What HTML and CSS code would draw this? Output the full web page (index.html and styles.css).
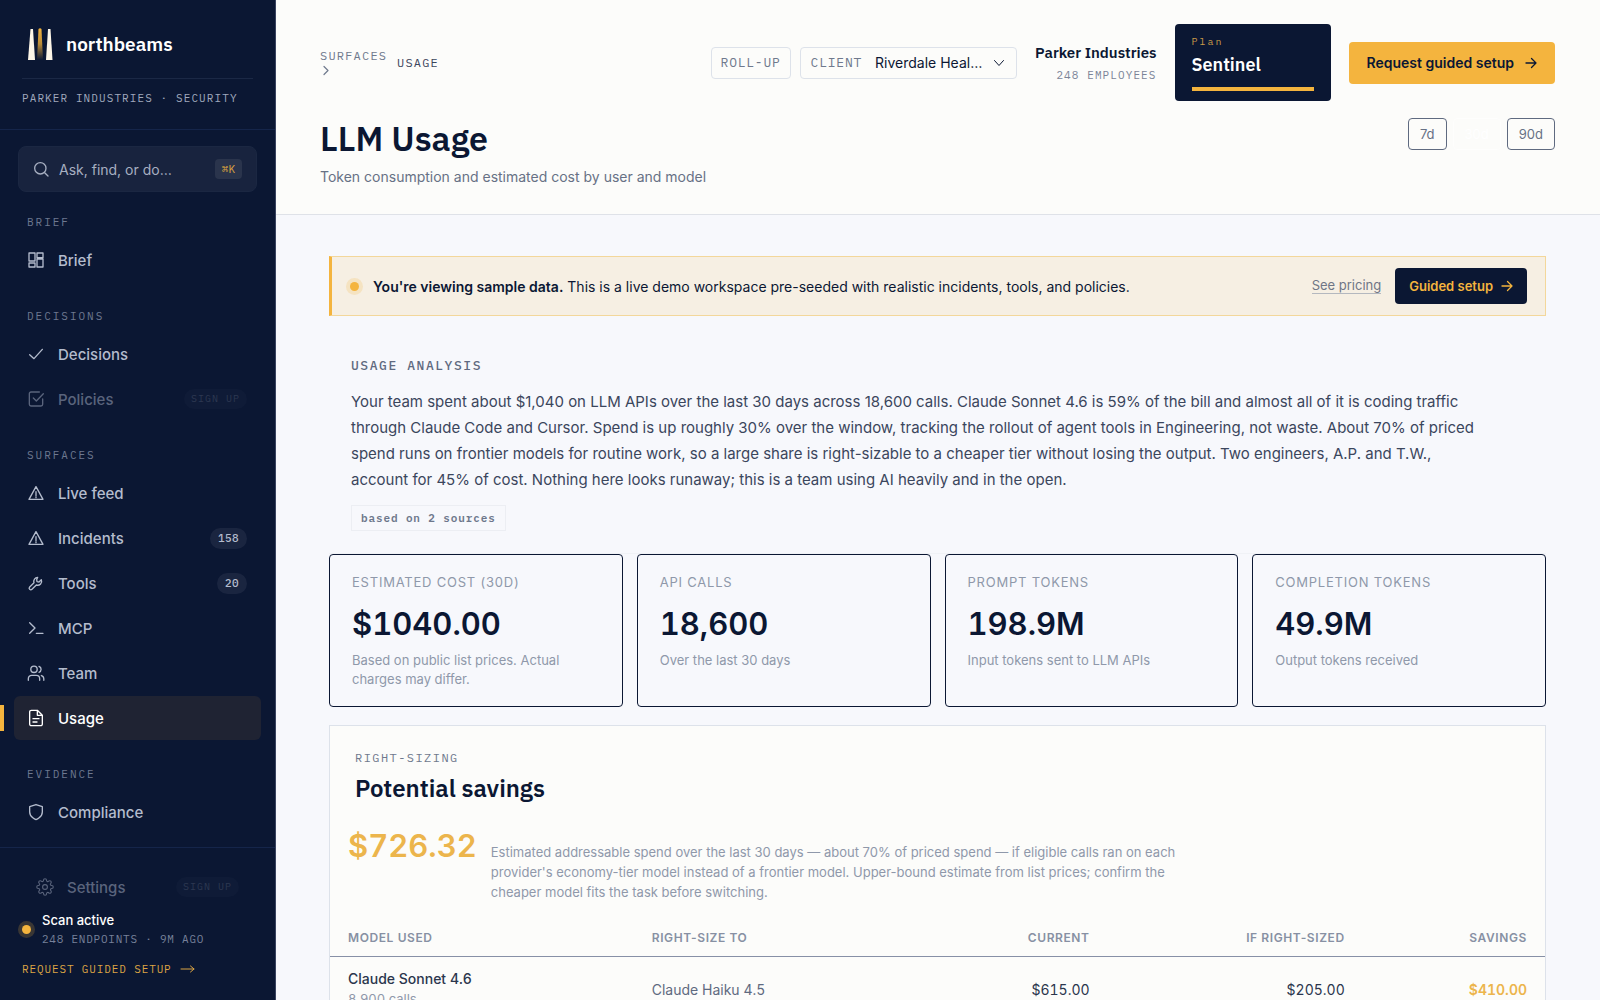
FILE: index.html
```html
<!DOCTYPE html>
<html lang="en">
<head>
    <meta charset="UTF-8">
    <meta name="viewport" content="width=device-width, initial-scale=1.0">
    <title>LLM Usage - northbeams</title>
    <link rel="stylesheet" href="styles.css">
</head>
<body>
    <div class="app">
        <aside class="sidebar">
            <div class="brand">
                <a class="brand-link" href="#">
                    <svg class="brand-logo" width="28" height="34" viewBox="0 0 28 34">
                        <defs>
                            <linearGradient id="beam" x1="0" y1="0" x2="0" y2="1">
                                <stop offset="0" stop-color="#f4b43e"/>
                                <stop offset="0.5" stop-color="#b88a38"/>
                                <stop offset="1" stop-color="#0b1733"/>
                            </linearGradient>
                        </defs>
                        <path d="M4.500 2h2.500l2 31H2z" fill="#fdf6e8"/>
                        <path d="M12.500 2q1.500-1.500 3 0l1.500 31h-6z" fill="url(#beam)"/>
                        <path d="M22 2h2.500l2 31h-6.500z" fill="#fdf6e8"/>
                    </svg>
                    <span class="brand-name">northbeams</span>
                </a>
                <p class="brand-org">PARKER INDUSTRIES · SECURITY</p>
            </div>

            <button class="search" type="button">
                <svg class="icon" viewBox="0 0 24 24"><circle cx="11" cy="11" r="8.5"/><path d="m17.5 17.5 5 5"/></svg>
                <span>Ask, find, or do…</span>
                <kbd>⌘K</kbd>
            </button>

            <nav class="nav">
                <h2 class="nav-label">BRIEF</h2>
                <a class="nav-item" href="#">
                    <svg class="icon" viewBox="0 0 24 24"><path d="M1.500 1.500h9v12h-9zM13.500 1.500h9v7h-9zM13.500 10.500h9v12h-9zM1.500 16.500h9v6h-9z"/></svg>
                    <span>Brief</span>
                </a>

                <h2 class="nav-label">DECISIONS</h2>
                <a class="nav-item" href="#">
                    <svg class="icon" viewBox="0 0 24 24"><path d="M21.500 5 9 19l-6.500-6"/></svg>
                    <span>Decisions</span>
                </a>
                <a class="nav-item locked" href="#">
                    <svg class="icon" viewBox="0 0 24 24"><path d="m8 10.500 4.500 4.500L23 4"/><path d="M22 12v8a2.500 2.500 0 0 1-2.500 2.500h-15A2.500 2.500 0 0 1 2 20V4a2.500 2.500 0 0 1 2.500-2.500H17"/></svg>
                    <span>Policies</span>
                    <span class="pill">SIGN UP</span>
                </a>

                <h2 class="nav-label">SURFACES</h2>
                <a class="nav-item" href="#">
                    <svg class="icon" viewBox="0 0 24 24"><path d="M12 2.500 1.500 21.500h21zM12 10v6M12 18v1"/></svg>
                    <span>Live feed</span>
                </a>
                <a class="nav-item" href="#">
                    <svg class="icon" viewBox="0 0 24 24"><path d="M12 2.500 1.500 21.500h21zM12 10v6M12 18v1"/></svg>
                    <span>Incidents</span>
                    <span class="count">158</span>
                </a>
                <a class="nav-item" href="#">
                    <svg class="icon" viewBox="0 0 24 24"><path d="M14.500 3.500a6 6 0 0 0-5.500 8L2.500 18a2.300 2.300 0 0 0 3.500 3.500l6.500-6.500a6 6 0 0 0 7.500-8l-3.500 3.500-3-.500-.500-3z"/></svg>
                    <span>Tools</span>
                    <span class="count">20</span>
                </a>
                <a class="nav-item" href="#">
                    <svg class="icon" viewBox="0 0 24 24"><path d="m2.500 4 8 8-8 8M12.500 20h10"/></svg>
                    <span>MCP</span>
                </a>
                <a class="nav-item" href="#">
                    <svg class="icon" viewBox="0 0 24 24"><circle cx="9" cy="6.500" r="4.800"/><path d="M.500 23v-2.500a5 5 0 0 1 5-5h7a5 5 0 0 1 5 5V23M16.500 2a4.800 4.800 0 0 1 0 9M20 15.800a5 5 0 0 1 3.700 4.700V23"/></svg>
                    <span>Team</span>
                </a>
                <a class="nav-item active" href="#">
                    <svg class="icon" viewBox="0 0 24 24"><path d="M14 .500H5A2.500 2.500 0 0 0 2.500 3v18A2.500 2.500 0 0 0 5 23.500h14a2.500 2.500 0 0 0 2.500-2.500V8zM14 .500V8h7.500M7.500 13h9M7.500 18h6"/></svg>
                    <span>Usage</span>
                </a>

                <h2 class="nav-label">EVIDENCE</h2>
                <a class="nav-item" href="#">
                    <svg class="icon" viewBox="0 0 24 24"><path d="M12 23.500s9.500-3.500 9.500-11.500V4L12 .800 2.500 4v8c0 8 9.500 11.500 9.500 11.500z"/></svg>
                    <span>Compliance</span>
                </a>
            </nav>

            <div class="sidebar-footer">
                <a class="nav-item locked settings" href="#">
                    <svg class="icon" viewBox="0 0 24 24"><circle cx="12" cy="12" r="3.200"/><path d="M19.400 15a1.650 1.650 0 0 0 .33 1.820l.06.06a2 2 0 1 1-2.830 2.830l-.06-.06a1.650 1.650 0 0 0-2.800 1.170V21a2 2 0 1 1-4 0v-.09a1.650 1.650 0 0 0-2.910-1.200l-.06.06a2 2 0 1 1-2.830-2.830l.06-.06A1.650 1.650 0 0 0 3.090 14H3a2 2 0 1 1 0-4h.09a1.650 1.650 0 0 0 1.200-2.910l-.06-.06a2 2 0 1 1 2.830-2.830l.06.06A1.650 1.650 0 0 0 10 3.090V3a2 2 0 1 1 4 0v.09a1.650 1.650 0 0 0 2.820 1.200l.06-.06a2 2 0 1 1 2.830 2.830l-.06.06A1.650 1.650 0 0 0 20.910 10H21a2 2 0 1 1 0 4h-.09a1.650 1.650 0 0 0-1.510 1z"/></svg>
                    <span>Settings</span>
                    <span class="pill">SIGN UP</span>
                </a>
                <div class="scan">
                    <span class="dot"></span>
                    <div>
                        <p class="scan-title">Scan active</p>
                        <p class="scan-meta">248 ENDPOINTS · 9M AGO</p>
                    </div>
                </div>
                <a class="setup-link" href="#">
                    REQUEST GUIDED SETUP
                    <svg class="long-arrow" viewBox="0 0 16 10"><path d="M1 5h13M10.500 2l3.500 3-3.500 3"/></svg>
                </a>
            </div>
        </aside>

        <div class="page">
            <header class="header">
                <div class="topbar">
                    <nav class="breadcrumb">
                        <a href="#">SURFACES
                            <svg class="crumb-arrow" viewBox="0 0 12 12"><path d="m4 2 4 4-4 4"/></svg>
                        </a>
                        <span>USAGE</span>
                    </nav>
                    <div class="topbar-tools">
                        <div class="scope">
                            <button class="rollup" type="button">ROLL-UP</button>
                            <div class="client">
                                <label for="client">CLIENT</label>
                                <select id="client">
                                    <option>Riverdale Heal…</option>
                                </select>
                                <svg class="chevron" viewBox="0 0 12 12"><path d="m1.500 3.500 4.500 5 4.500-5"/></svg>
                            </div>
                        </div>
                        <div class="org">
                            <p class="org-name">Parker Industries</p>
                            <p class="org-meta">248 EMPLOYEES</p>
                        </div>
                        <div class="plan">
                            <p class="plan-label">Plan</p>
                            <p class="plan-name">Sentinel</p>
                            <div class="plan-bar"></div>
                        </div>
                        <button class="cta" type="button">
                            Request guided setup
                            <svg class="arrow" viewBox="0 0 12 12"><path d="M1 6h10M6.500 1.500 11 6l-4.500 4.500"/></svg>
                        </button>
                    </div>
                </div>
                <div class="title-row">
                    <div>
                        <h1>LLM Usage</h1>
                        <p class="subtitle">Token consumption and estimated cost by user and model</p>
                    </div>
                    <div class="ranges">
                        <button type="button">7d</button>
                        <button class="selected" type="button">30d</button>
                        <button type="button">90d</button>
                    </div>
                </div>
            </header>

            <main class="content">
                <div class="banner">
                    <span class="dot"></span>
                    <p><strong>You're viewing sample data.</strong> This is a live demo workspace pre-seeded with realistic incidents, tools, and policies.</p>
                    <a class="pricing" href="#">See pricing</a>
                    <button class="guided" type="button">
                        Guided setup
                        <svg class="arrow" viewBox="0 0 12 12"><path d="M1 6h10M6.500 1.500 11 6l-4.500 4.500"/></svg>
                    </button>
                </div>

                <section class="analysis">
                    <h2>USAGE ANALYSIS</h2>
                    <p>Your team spent about $1,040 on LLM APIs over the last 30 days across 18,600 calls. Claude Sonnet 4.6 is 59% of the bill and almost all of it is coding traffic through Claude Code and Cursor. Spend is up roughly 30% over the window, tracking the rollout of agent tools in Engineering, not waste. About 70% of priced spend runs on frontier models for routine work, so a large share is right-sizable to a cheaper tier without losing the output. Two engineers, A.P. and T.W., account for 45% of cost. Nothing here looks runaway; this is a team using AI heavily and in the open.</p>
                    <button class="sources" type="button">based on 2 sources</button>
                </section>

                <section class="stats">
                    <div class="stat">
                        <h3>ESTIMATED COST (30D)</h3>
                        <p class="stat-value">$1040.00</p>
                        <p class="stat-note">Based on public list prices. Actual charges may differ.</p>
                    </div>
                    <div class="stat">
                        <h3>API CALLS</h3>
                        <p class="stat-value">18,600</p>
                        <p class="stat-note">Over the last 30 days</p>
                    </div>
                    <div class="stat">
                        <h3>PROMPT TOKENS</h3>
                        <p class="stat-value">198.9M</p>
                        <p class="stat-note">Input tokens sent to LLM APIs</p>
                    </div>
                    <div class="stat">
                        <h3>COMPLETION TOKENS</h3>
                        <p class="stat-value">49.9M</p>
                        <p class="stat-note">Output tokens received</p>
                    </div>
                </section>

                <section class="panel">
                    <div class="panel-head">
                        <p class="eyebrow">RIGHT-SIZING</p>
                        <h2>Potential savings</h2>
                    </div>
                    <div class="savings">
                        <p class="savings-value">$726.32</p>
                        <p class="savings-note">Estimated addressable spend over the last 30 days — about 70% of priced spend — if eligible calls ran on each provider's economy-tier model instead of a frontier model. Upper-bound estimate from list prices; confirm the cheaper model fits the task before switching.</p>
                    </div>
                    <table>
                        <thead>
                            <tr>
                                <th class="col-model">MODEL USED</th>
                                <th class="col-target">RIGHT-SIZE TO</th>
                                <th class="col-current num">CURRENT</th>
                                <th class="col-sized num">IF RIGHT-SIZED</th>
                                <th class="num">SAVINGS</th>
                            </tr>
                        </thead>
                        <tbody>
                            <tr>
                                <td><span class="model">Claude Sonnet 4.6</span><span class="calls">8,900 calls</span></td>
                                <td class="target">Claude Haiku 4.5</td>
                                <td class="num">$615.00</td>
                                <td class="num">$205.00</td>
                                <td class="num saved">$410.00</td>
                            </tr>
                        </tbody>
                    </table>
                </section>
            </main>
        </div>
    </div>
</body>
</html>
```

FILE: styles.css
```css
* {
    box-sizing: border-box;
}
body {
    margin: 0;
    font-family: Inter, sans-serif;
    font-size: 15px;
    font-optical-sizing: none;
    color: #0b1733;
    background-color: #f7f8fc;
}
h1, h2, h3, p {
    margin: 0;
}
a {
    color: inherit;
    text-decoration: none;
}
button, select {
    font-family: inherit;
    color: inherit;
    cursor: pointer;
}
svg {
    fill: none;
    stroke: currentColor;
    stroke-linecap: round;
    stroke-linejoin: round;
    flex-shrink: 0;
}
.app {
    display: flex;
    height: 100vh;
    overflow: hidden;
}

/* sidebar */
.sidebar {
    display: flex;
    flex-direction: column;
    width: 276px;
    flex-shrink: 0;
    background-color: #0b1733;
    border-right: 1px solid #3a4460;
    color: #b4bccd;
}
.brand {
    padding: 27px 22px 23px;
    border-bottom: 1px solid #15254a;
}
.brand-link {
    display: flex;
    align-items: center;
    gap: 12px;
    padding: 0 4px 17px;
    border-bottom: 1px solid #1b2845;
}
.brand-logo {
    stroke: none;
}
.brand-name {
    font-family: "IBM Plex Sans", "Open Sans", sans-serif;
    font-size: 19px;
    font-weight: 600;
    color: #fff;
}
.brand-org {
    margin-top: 11px;
    font-family: "IBM Plex Mono", "Liberation Mono", monospace;
    font-size: 11px;
    line-height: 16px;
    letter-spacing: 0.1em;
    white-space: nowrap;
    color: #a0a9bd;
}
.search {
    display: flex;
    align-items: center;
    gap: 10px;
    height: 46px;
    margin: 16px 18px 0;
    padding: 0 14px;
    border: 1px solid #1b2742;
    border-radius: 8px;
    background-color: #18233e;
    font-size: 14px;
    color: #a7afc1;
}
.search kbd {
    margin-left: auto;
    padding: 0 7px;
    border-radius: 4px;
    background-color: #2a344c;
    font-family: "IBM Plex Mono", "Liberation Mono", "DejaVu Sans Mono", monospace;
    font-size: 11px;
    line-height: 20px;
    color: #d9a240;
}
.icon {
    width: 16px;
    height: 16px;
    stroke-width: 2;
    overflow: visible;
}
.nav {
    flex: 1;
    display: flex;
    flex-direction: column;
    gap: 1px;
    padding: 22px 14px 0;
    overflow: hidden;
}
.nav-label {
    margin: 25px 13px 7px;
    font-family: "IBM Plex Mono", "Liberation Mono", monospace;
    font-size: 11px;
    font-weight: 400;
    line-height: 16px;
    letter-spacing: 0.18em;
    color: #6d7890;
}
.nav-label:first-child {
    margin-top: 0;
}
.nav-item {
    position: relative;
    display: flex;
    align-items: center;
    gap: 14px;
    flex-shrink: 0;
    height: 44px;
    padding: 0 14px;
    border-radius: 6px;
    font-size: 15px;
    font-weight: 500;
}
.nav-item.active {
    background-color: #1f2333;
    color: #fff;
}
.nav-item.active::before {
    content: "";
    position: absolute;
    left: -14px;
    top: 9px;
    bottom: 9px;
    width: 4px;
    background-color: #f4b43e;
}
.locked {
    color: #5a647c;
}
.count, .pill {
    margin-left: auto;
    border-radius: 11px;
    font-family: "IBM Plex Mono", "Liberation Mono", monospace;
    font-size: 11px;
}
.count {
    padding: 0 8px;
    background-color: #1a2540;
    font-weight: 500;
    line-height: 21px;
    letter-spacing: 0.04em;
}
.pill {
    padding: 0 7px;
    background-color: #0f1b37;
    font-size: 10px;
    font-weight: 400;
    line-height: 20px;
    letter-spacing: 0.1em;
    color: #2d3851;
}
.sidebar-footer {
    padding: 17px 22px 22px;
    border-top: 1px solid #15254a;
}
.settings .icon {
    width: 18px;
    height: 18px;
    stroke-width: 1.5;
}
.settings {
    gap: 13px;
}
.dot {
    width: 9px;
    height: 9px;
    flex-shrink: 0;
    border-radius: 50%;
    background-color: #f4b43e;
    box-shadow: 0 0 0 4px rgba(244, 180, 62, 0.2);
}
.scan {
    display: flex;
    align-items: center;
    gap: 11px;
    padding-top: 2px;
}
.scan-title {
    font-size: 13px;
    font-weight: 500;
    line-height: 19px;
    color: #fff;
}
.scan-meta {
    font-family: "IBM Plex Mono", "Liberation Mono", monospace;
    font-size: 11px;
    line-height: 18px;
    letter-spacing: 0.07em;
    color: #77819a;
}
.setup-link {
    display: flex;
    align-items: center;
    gap: 8px;
    margin-top: 12px;
    font-family: "IBM Plex Mono", "Liberation Mono", monospace;
    font-size: 11px;
    line-height: 18px;
    letter-spacing: 0.08em;
    color: #dca544;
}
.long-arrow {
    width: 16px;
    height: 10px;
}

/* header */
.page {
    flex: 1;
    min-width: 0;
}
.header {
    padding: 24px 45px 27px 44px;
    border-bottom: 1px solid #dfe2e8;
    background-color: #fcfcfa;
}
.topbar, .topbar-tools, .scope, .client {
    display: flex;
    align-items: center;
}
.topbar {
    justify-content: space-between;
}
.topbar-tools {
    gap: 18px;
}
.breadcrumb {
    display: flex;
    align-items: center;
    gap: 9px;
    font-family: "IBM Plex Mono", "Liberation Mono", monospace;
    font-size: 12px;
    line-height: 15px;
    letter-spacing: 0.1em;
    color: #3c465c;
}
.breadcrumb a {
    width: 68px;
    color: #6f798d;
}
.crumb-arrow {
    display: block;
    width: 12px;
    height: 15px;
    stroke-width: 1.2;
}
.scope {
    gap: 9px;
    font-size: 13px;
}
.rollup, .client {
    height: 32px;
    border: 1px solid #dde2ea;
    border-radius: 4px;
    background: none;
}
.rollup, .client label {
    font-family: "IBM Plex Mono", "Liberation Mono", monospace;
    font-size: 13px;
    letter-spacing: 0.06em;
    color: #6f798d;
}
.rollup {
    padding: 0 9px;
}
.client {
    padding: 0 11px 0 10px;
}
.client select {
    appearance: none;
    width: 114px;
    margin: 0 4px 0 13px;
    padding: 0;
    border: 0;
    background: none;
    font-size: 14px;
}
.chevron {
    width: 12px;
    height: 12px;
}
.org {
    padding-top: 3px;
    text-align: right;
}
.org-name {
    font-family: "IBM Plex Sans", "Open Sans", sans-serif;
    font-size: 15px;
    font-weight: 600;
    line-height: 22px;
}
.org-meta {
    font-family: "IBM Plex Mono", "Liberation Mono", monospace;
    font-size: 11px;
    line-height: 22px;
    letter-spacing: 0.1em;
    color: #7b8498;
}
.plan {
    width: 156px;
    padding: 10px 17px;
    border-radius: 4px;
    background-color: #0b1733;
    color: #fff;
}
.plan-label {
    font-family: "IBM Plex Mono", "Liberation Mono", monospace;
    font-size: 10px;
    line-height: 16px;
    letter-spacing: 0.2em;
    color: #c99a48;
}
.plan-name {
    font-family: "IBM Plex Sans", "Open Sans", sans-serif;
    font-size: 18px;
    font-weight: 600;
    line-height: 30px;
}
.plan-bar {
    height: 4px;
    margin-top: 7px;
    background-color: #f4b43e;
}
.cta, .guided {
    display: flex;
    align-items: center;
    border: 0;
    border-radius: 4px;
    font-weight: 600;
    white-space: nowrap;
}
.cta {
    gap: 11px;
    height: 42px;
    padding: 0 18px;
    background-color: #f4b43e;
    font-size: 14px;
}
.arrow {
    width: 12px;
    height: 12px;
    stroke-width: 1.3;
}
.title-row {
    display: flex;
    justify-content: space-between;
    align-items: flex-start;
    margin-top: 17px;
}
h1 {
    font-family: "IBM Plex Sans", "Open Sans", sans-serif;
    font-size: 34px;
    font-weight: 600;
    line-height: 40px;
}
.subtitle {
    margin-top: 9px;
    font-size: 14px;
    line-height: 20px;
    color: #677185;
}
.ranges {
    display: flex;
    gap: 6px;
}
.ranges button {
    height: 32px;
    padding: 0 11px;
    border: 1px solid #5f6a80;
    border-radius: 4px;
    background: none;
    font-size: 13px;
    color: #677185;
}
.ranges .selected {
    border-color: #fefefd;
    color: #fff;
}

/* content */
.content {
    padding: 41px 54px 0 53px;
}
.banner {
    display: flex;
    align-items: center;
    gap: 14px;
    height: 60px;
    padding: 0 18px;
    border: 1px solid #f3d79b;
    border-left: 3px solid #f4b43e;
    background-color: #f6efe3;
}
.banner p {
    flex: 1;
    font-size: 14px;
}
.banner strong {
    font-weight: 600;
}
.pricing {
    font-size: 13px;
    line-height: 15px;
    border-bottom: 1px solid #b4b8bf;
    color: #6f7686;
}
.guided {
    gap: 8px;
    height: 36px;
    padding: 0 14px;
    background-color: #0b1733;
    font-size: 13px;
    color: #f4b43e;
}
.analysis {
    margin-top: 24px;
    padding: 17px 22px 22px;
    border-bottom: 1px solid #f0f2f6;
}
.analysis h2 {
    font-family: "IBM Plex Mono", "Liberation Mono", monospace;
    font-size: 13px;
    font-weight: 500;
    line-height: 18px;
    letter-spacing: 0.12em;
    color: #5f6a80;
}
.analysis p {
    max-width: 1132px;
    margin-top: 14px;
    font-size: 15px;
    line-height: 26px;
    color: #3b465c;
}
.sources {
    height: 26px;
    margin-top: 12px;
    padding: 0 9px;
    border: 1px solid #eceef3;
    background: none;
    font-family: "IBM Plex Mono", "Liberation Mono", monospace;
    font-size: 11px;
    font-weight: 600;
    letter-spacing: 0.08em;
    color: #6d778b;
}
.stats {
    display: grid;
    grid-template-columns: repeat(4, 1fr);
    gap: 14px;
}
.stat {
    padding: 18px 22px 17px;
    border: 1px solid #0b1733;
    border-radius: 4px;
}
.stat h3 {
    font-size: 13px;
    font-weight: 400;
    line-height: 19px;
    letter-spacing: 0.06em;
    color: #8f98aa;
}
.stat-value {
    margin: 12px 0 8px;
    font-size: 31px;
    font-weight: 600;
    font-variant-numeric: tabular-nums;
    line-height: 39px;
}
.stat-note {
    font-size: 13px;
    line-height: 19px;
    color: #8f98aa;
}
.panel {
    margin-top: 18px;
    border: 1px solid #dde2ea;
    background-color: #fcfcfa;
}
.panel-head {
    padding: 24px 25px 0;
}
.eyebrow {
    font-family: "IBM Plex Mono", "Liberation Mono", monospace;
    font-size: 12px;
    line-height: 16px;
    letter-spacing: 0.12em;
    color: #6f798d;
}
.panel-head h2 {
    margin-top: 6px;
    font-family: "IBM Plex Sans", "Open Sans", sans-serif;
    font-size: 24px;
    font-weight: 600;
    line-height: 32px;
}
.savings {
    display: flex;
    align-items: baseline;
    gap: 14px;
    padding: 22px 18px 18px;
}
.savings-value {
    font-size: 31px;
    font-weight: 600;
    font-variant-numeric: tabular-nums;
    line-height: 39px;
    color: #ecb54c;
}
.savings-note {
    max-width: 720px;
    font-size: 13px;
    line-height: 20px;
    color: #8f98aa;
}
table {
    width: 100%;
    border-collapse: collapse;
    table-layout: fixed;
}
th {
    padding: 9px 18px;
    border-bottom: 1px solid #8790a6;
    font-size: 12px;
    font-weight: 600;
    line-height: 18px;
    letter-spacing: 0.05em;
    text-align: left;
    color: #8790a3;
}
td {
    padding: 12px 18px;
    font-size: 14px;
    font-variant-numeric: tabular-nums;
    color: #2b364d;
}
.num {
    text-align: right;
}
.col-model {
    width: 25%;
}
.col-target {
    width: 22%;
}
.col-current {
    width: 17%;
}
.col-sized {
    width: 21%;
}
.model, .calls {
    display: block;
    line-height: 20px;
}
.model {
    font-weight: 500;
}
.calls {
    font-size: 13px;
    color: #8f98aa;
}
.target {
    color: #5f6a80;
}
td.saved {
    font-weight: 600;
    color: #ecb54c;
}
```
